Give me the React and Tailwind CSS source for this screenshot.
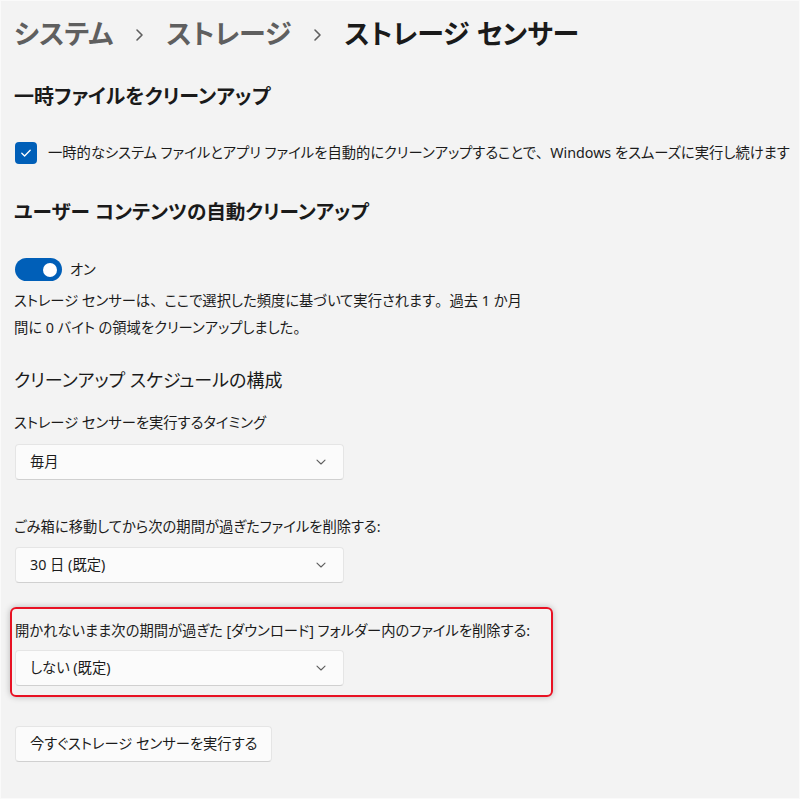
import React from "react";

const font = "font-['Noto_Sans','Noto_Sans_CJK_JP',sans-serif] [font-feature-settings:'palt']";

function P({ children }) {
  return <span className="[font-feature-settings:normal]">{children}</span>;
}

function Chevron() {
  return (
    <svg width="12" height="12" viewBox="0 0 12 12" className="shrink-0">
      <path d="M2 4.2 L6 8 L10 4.2" fill="none" stroke="#5d5d5d" strokeWidth="1.1" strokeLinecap="round" strokeLinejoin="round" />
    </svg>
  );
}

function Sep() {
  return (
    <svg width="9" height="14" viewBox="0 0 9 14" className="shrink-0 mx-[22px] mt-[4px]">
      <path d="M2 2 L7 7 L2 12" fill="none" stroke="#5f5f5f" strokeWidth="1.6" strokeLinecap="round" strokeLinejoin="round" />
    </svg>
  );
}

function Dropdown({ value }) {
  return (
    <div className="w-[329px] h-[36px] bg-[#fbfbfb] border border-[#e5e5e5] border-b-[#d0d0d0] rounded-[4px] flex items-center justify-between pl-[14px] pr-[16px] text-[14.3px] text-[#1b1b1b]">
      <span>{value}</span>
      <Chevron />
    </div>
  );
}

export default function App() {
  return (
    <div className={`w-[800px] h-[799px] bg-[#f3f3f3] border border-[#fafafa] overflow-hidden ${font}`}>
      <div className="pl-[13px] pt-[13px] flex flex-col items-start">
        <div className="h-[38px] flex items-center text-[27px] font-semibold leading-none">
          <span className="text-[#5f5f5f]">システム</span>
          <Sep />
          <span className="text-[#5f5f5f]">ストレージ</span>
          <Sep />
          <span className="text-[#1a1a1a]">ストレージ センサー</span>
        </div>

        <div className="mt-[31px] h-[28px] flex items-center text-[20px] font-semibold text-[#1a1a1a]">
          一時ファイルをクリーンアップ
        </div>

        <div className="mt-[31px] flex items-center h-[22px]">
          <div className="w-[22px] h-[22px] rounded-[4px] bg-[#005fb8] flex items-center justify-center ml-px">
            <svg width="12" height="12" viewBox="0 0 12 12">
              <path d="M1.8 6.3 L4.6 9 L10.2 3.2" fill="none" stroke="#fff" strokeWidth="1.3" strokeLinecap="round" strokeLinejoin="round" />
            </svg>
          </div>
          <span className="ml-[11px] text-[14.3px] text-[#1b1b1b] whitespace-nowrap">
            一時的なシステム ファイルとアプリ ファイルを自動的にクリーンアップすることで<P>、</P>Windows をスムーズに実行し続けます
          </span>
        </div>

        <div className="mt-[34px] h-[28px] flex items-center text-[19.6px] font-semibold text-[#1a1a1a]">
          ユーザー コンテンツの自動クリーンアップ
        </div>

        <div className="mt-[32px] flex items-center h-[23px]">
          <div className="w-[47px] h-[23px] rounded-full bg-[#005fb8] flex items-center justify-end pr-[5px] ml-px">
            <div className="w-[14px] h-[14px] rounded-full bg-white" />
          </div>
          <span className="ml-[8px] text-[14.3px] text-[#1b1b1b]">オン</span>
        </div>

        <div className="mt-[6px] text-[14.3px] leading-[27px] text-[#1b1b1b]">
          ストレージ センサーは<P>、</P>ここで選択した頻度に基づいて実行されます<P>。</P>過去 1 か月
          <br />
          間に 0 バイト の領域をクリーンアップしました<P>。</P>
        </div>

        <div className="mt-[25px] h-[28px] flex items-center text-[18px] text-[#1a1a1a]">
          クリーンアップ スケジュールの構成
        </div>

        <div className="mt-[18px] h-[22px] flex items-center text-[14.3px] text-[#1b1b1b]">
          ストレージ センサーを実行するタイミング
        </div>
        <div className="mt-[10px] ml-px">
          <Dropdown value="毎月" />
        </div>

        <div className="mt-[36px] h-[22px] flex items-center text-[14.3px] text-[#1b1b1b]">
          ごみ箱に移動してから次の期間が過ぎたファイルを削除する:
        </div>
        <div className="mt-[9px] ml-px">
          <Dropdown value="30 日 (既定)" />
        </div>

        <div className="mt-[24px] -ml-[4px] w-[543px] h-[90px] border-2 border-[#e81123] rounded-[6px] shadow-[0_0_6px_rgba(0,0,0,0.25)] pt-[11px] pl-[3px]">
          <div className="h-[22px] flex items-center text-[14.3px] text-[#1b1b1b] whitespace-nowrap">
            開かれないまま次の期間が過ぎた [ダウンロード] フォルダー内のファイルを削除する:
          </div>
          <div className="mt-[8px]">
            <Dropdown value="しない (既定)" />
          </div>
        </div>

        <div className="mt-[29px] ml-px h-[36px] px-[14px] bg-[#fbfbfb] border border-[#e5e5e5] border-b-[#d0d0d0] rounded-[4px] flex items-center text-[14.3px] text-[#1b1b1b]">
          今すぐストレージ センサーを実行する
        </div>
      </div>
    </div>
  );
}
